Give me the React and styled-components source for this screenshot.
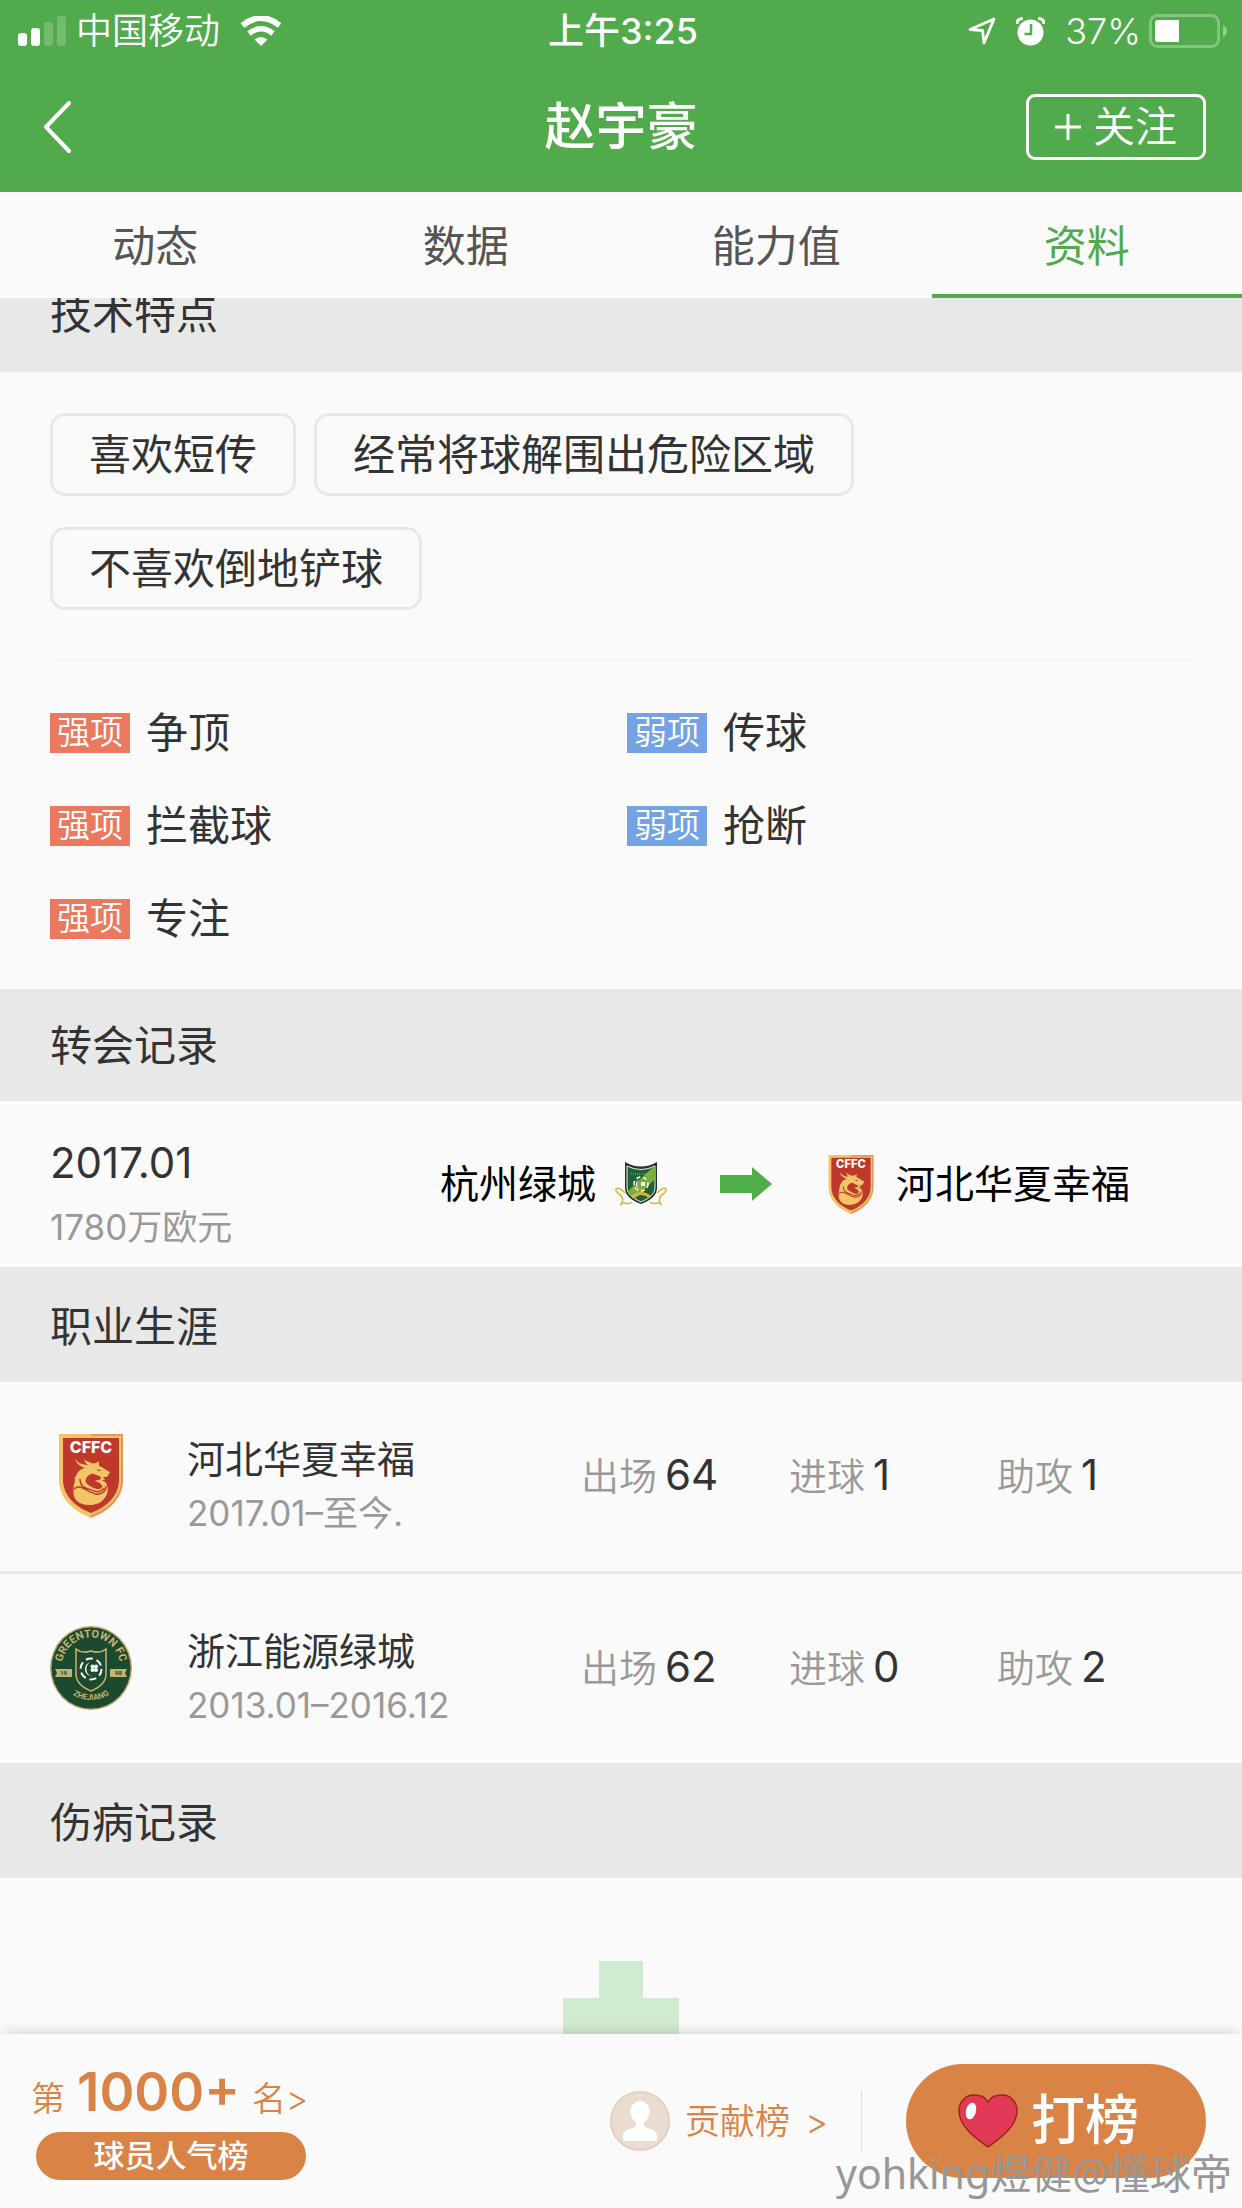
import React, { useState } from "react";
//Style
import styled, { createGlobalStyle } from "styled-components";

//Data
const tabs = ["动态", "数据", "能力值", "资料"];
const habits = ["喜欢短传", "经常将球解围出危险区域", "不喜欢倒地铲球"];
const strengths = ["争顶", "拦截球", "专注"];
const weaknesses = ["传球", "抢断"];

const App = () => {
  //State
  const [activeTab, setActiveTab] = useState("资料");

  return (
    <Screen>
      <GlobalStyle />
      <Header>
        <StatusBar>
          <StatusGroup>
            <SignalIcon />
            <span>中国移动</span>
            <WifiIcon />
          </StatusGroup>
          <Clock>上午3:25</Clock>
          <StatusGroup $end>
            <LocationIcon />
            <AlarmIcon />
            <span>37%</span>
            <BatteryIcon />
          </StatusGroup>
        </StatusBar>
        <TitleBar>
          <BackButton type="button" aria-label="返回">
            <svg width="30" height="54" viewBox="0 0 30 54" fill="none">
              <path
                d="M27 3 L4 27 L27 51"
                stroke="#fff"
                strokeWidth="4"
                strokeLinecap="round"
                strokeLinejoin="round"
              />
            </svg>
          </BackButton>
          <h1>赵宇豪</h1>
          <FollowButton type="button">
            <svg width="26" height="26" viewBox="0 0 26 26">
              <path d="M13 0V26M0 13H26" stroke="#fff" strokeWidth="3" />
            </svg>
            关注
          </FollowButton>
        </TitleBar>
      </Header>
      <Tabs>
        {tabs.map((tab) => (
          <Tab
            type="button"
            key={tab}
            $active={tab === activeTab}
            onClick={() => setActiveTab(tab)}
          >
            {tab}
          </Tab>
        ))}
      </Tabs>

      <Content>
        <Scrolled>
          <SectionTitle $edge="bottom">技术特点</SectionTitle>
          <Skills>
            <Tags>
              {habits.map((habit) => (
                <li key={habit}>{habit}</li>
              ))}
            </Tags>
            <Traits>
              <TraitList>
                {strengths.map((trait) => (
                  <li key={trait}>
                    <Badge $color="#ea7960">强项</Badge>
                    {trait}
                  </li>
                ))}
              </TraitList>
              <TraitList>
                {weaknesses.map((trait) => (
                  <li key={trait}>
                    <Badge $color="#73a3e5">弱项</Badge>
                    {trait}
                  </li>
                ))}
              </TraitList>
            </Traits>
          </Skills>

          <SectionTitle>转会记录</SectionTitle>
          <Transfer>
            <TransferInfo>
              <strong>2017.01</strong>
              <small>1780万欧元</small>
            </TransferInfo>
            <Club>
              杭州绿城
              <HangzhouCrest />
            </Club>
            <Arrow width="52" height="34" viewBox="0 0 52 34">
              <path d="M0 8H32V0L52 17L32 34V26H0Z" fill="#4fae49" />
            </Arrow>
            <Club $wide>
              <HebeiCrest width="46" height="59" />
              河北华夏幸福
            </Club>
          </Transfer>

          <SectionTitle $edge="top">职业生涯</SectionTitle>
          <Career>
            <CareerRow>
              <HebeiCrest width="82" height="84" />
              <CareerClub>
                <h3>河北华夏幸福</h3>
                <p>2017.01–至今.</p>
              </CareerClub>
              <Stat>
                出场<b>64</b>
              </Stat>
              <Stat>
                进球<b>1</b>
              </Stat>
              <Stat>
                助攻<b>1</b>
              </Stat>
            </CareerRow>
            <CareerRow>
              <GreentownCrest />
              <CareerClub>
                <h3>浙江能源绿城</h3>
                <p>2013.01–2016.12</p>
              </CareerClub>
              <Stat>
                出场<b>62</b>
              </Stat>
              <Stat>
                进球<b>0</b>
              </Stat>
              <Stat>
                助攻<b>2</b>
              </Stat>
            </CareerRow>
          </Career>

          <SectionTitle $edge="top">伤病记录</SectionTitle>
          <Injuries>
            <svg width="116" height="116" viewBox="0 0 116 116">
              <path
                d="M36 0H80V37H116V79H80V116H36V79H0V37H36Z"
                fill="#d1ebd1"
              />
            </svg>
          </Injuries>
        </Scrolled>
      </Content>

      <BottomBar>
        <Rank href="#rank">
          <RankLine>
            第<b>1000+</b>名&gt;
          </RankLine>
          <RankLabel>球员人气榜</RankLabel>
        </Rank>
        <Contributors href="#contributors">
          <AvatarIcon />
          <span>贡献榜</span>
          <span>&gt;</span>
        </Contributors>
        <VoteButton type="button">
          <HeartIcon />
          打榜
        </VoteButton>
        <Watermark>yohking煜健@懂球帝</Watermark>
      </BottomBar>
    </Screen>
  );
};

//Status icons
const SignalIcon = () => (
  <svg width="48" height="30" viewBox="0 0 48 30" fill="#fff">
    <rect x="0" y="17" width="9" height="13" rx="3" />
    <rect x="13" y="12" width="9" height="18" rx="3" />
    <rect x="26" y="6" width="9" height="24" rx="3" opacity="0.2" />
    <rect x="39" y="0" width="9" height="30" rx="3" opacity="0.2" />
  </svg>
);

const WifiIcon = () => (
  <svg width="42" height="30" viewBox="0 0 42 30" fill="none">
    <path d="M2.5 9.5Q21 -5.5 39.5 9.5" stroke="#fff" strokeWidth="6" />
    <path d="M9 17.5Q21 8 33 17.5" stroke="#fff" strokeWidth="5.5" />
    <path d="M14.5 23.5Q21 18.5 27.5 23.5L21 30Z" fill="#fff" />
  </svg>
);

const LocationIcon = () => (
  <svg width="28" height="28" viewBox="0 0 28 28" fill="none">
    <path
      d="M26 2L2 12.5L14.5 13.5L16 26Z"
      stroke="#fff"
      strokeWidth="2.8"
      strokeLinejoin="round"
    />
  </svg>
);

const AlarmIcon = () => (
  <svg width="29" height="29" viewBox="0 0 29 29" fill="none">
    <circle cx="14.5" cy="15.5" r="13" fill="#fff" />
    <path d="M1 7Q1 1.5 7 1.5M28 7Q28 1.5 22 1.5" stroke="#fff" strokeWidth="3" />
    <path d="M15 7V17H8.5" stroke="#51aa4b" strokeWidth="2.5" />
  </svg>
);

const BatteryIcon = () => (
  <svg width="79" height="34" viewBox="0 0 79 34">
    <rect
      x="1.5"
      y="1.5"
      width="68"
      height="31"
      rx="7"
      fill="none"
      stroke="#fff"
      strokeOpacity="0.3"
      strokeWidth="3"
    />
    <path d="M74 11Q78 13 78 17T74 23Z" fill="#fff" opacity="0.4" />
    <path d="M30 6V28H9Q6 28 6 25V9Q6 6 9 6Z" fill="#fff" />
  </svg>
);

//Bottom bar icons
const AvatarIcon = () => (
  <svg width="60" height="60" viewBox="0 0 60 60">
    <circle cx="30" cy="30" r="29" fill="#eadccf" stroke="#e2d0c0" strokeWidth="2" />
    <path
      d="M30 10C24 10 20 15 20.5 21C21 27 24 30 26 32V35C25 38 13 37 13 45V48Q13 50 16 50H44Q47 50 47 48V45C47 37 35 38 34 35V32C36 30 39 27 39.5 21C40 15 36 10 30 10Z"
      fill="#fff"
    />
  </svg>
);

const HeartIcon = () => (
  <svg width="60" height="54" viewBox="0 0 60 54">
    <path
      d="M30 53C22 47 1 34 1 17C1 7 8 1 16 1C23 1 28 4 30 8C32 4 37 1 44 1C52 1 59 7 59 17C59 34 38 47 30 53Z"
      fill="#e23a56"
      stroke="#9e2419"
      strokeWidth="1.5"
    />
    <ellipse cx="13" cy="17" rx="5" ry="8.5" fill="#fff" transform="rotate(14 13 17)" />
  </svg>
);

//Club crests
const HebeiCrest = ({ width, height }) => (
  <svg width={width} height={height} viewBox="0 0 64 84">
    <path d="M0 0H64V46C64 64 50 77 32 84C14 77 0 64 0 46Z" fill="#f3c468" />
    <path d="M32 0H64V46C64 64 50 77 32 84Z" fill="#e2985a" />
    <path d="M2 2H62V46C62 63 49 75 32 81C15 75 2 63 2 46Z" fill="#f3c468" />
    <path d="M4 4H60V46C60 61 48 73 32 79C16 73 4 61 4 46Z" fill="#be392c" />
    <text
      x="32"
      y="19"
      textAnchor="middle"
      fontFamily="Inter, sans-serif"
      fontSize="16"
      fontWeight="800"
      fill="#fff"
    >
      CFFC
    </text>
    <path
      d="M16 24C17 30 21 32 26 34C18 36 19 40 16 43C15 45 17 46 15 50C14 58 14 63 18 67C24 73 39 72 44 66C48 62 50 57 48 51C47 47 41 44 36 47C40 48 44 51 43 53C40 58 32 53 28 50C25 47 27 42 32 40C36 39 38 42 42 43L41 46L46 46L44 43L48 43L51 38C46 36 44 33 40 32L40 27C37 30 33 30 30 28C27 27 25 26 25 23C25 27 27 30 29 31C24 31 18 29 16 24Z"
      fill="#f3c468"
    />
    <path
      d="M15 55C22 49 29 59 37 60C43 61 47 57 47 52M21 45C21 54 28 54 35 57C40 59 44 56 45 54M31 44C28 46 31 50 34 49"
      fill="none"
      stroke="#be392c"
      strokeWidth="1.5"
    />
    <path d="M38 35L43 37L39 37Z" fill="#be392c" />
  </svg>
);

const GreentownCrest = () => (
  <svg width="82" height="84" viewBox="0 0 82 84">
    <defs>
      <path id="ring-top" d="M14 51A29 29 0 1 1 68 51" />
      <path id="ring-bottom" d="M10 54A34 34 0 0 0 72 54" />
    </defs>
    <ellipse cx="41" cy="42" rx="41" ry="42" fill="#b8a566" />
    <ellipse cx="41" cy="42" rx="39.5" ry="40.5" fill="#1c4a2e" />
    <g fill="#c5b270" fontFamily="Roboto, sans-serif" fontWeight="700">
      <text fontSize="11" textAnchor="middle">
        <textPath href="#ring-top" startOffset="50%">
          GREENTOWN FC
        </textPath>
      </text>
      <text fontSize="8" textAnchor="middle">
        <textPath href="#ring-bottom" startOffset="50%">
          ZHEJIANG
        </textPath>
      </text>
    </g>
    <path d="M5 43H22V51H5L7 47ZM77 43H60V51H77L75 47Z" fill="#c5b270" />
    <g fill="#1c4a2e" fontFamily="Roboto, sans-serif" fontSize="6" fontWeight="700">
      <text x="10" y="49">19</text>
      <text x="65" y="49">98</text>
    </g>
    <path
      d="M26 23Q32 28 41 25Q50 28 56 23V48Q56 59 41 65Q26 59 26 48Z"
      fill="#1c4a2e"
      stroke="#c5b270"
      strokeWidth="1.5"
    />
    <circle
      cx="41"
      cy="43"
      r="10.5"
      fill="none"
      stroke="#fff"
      strokeWidth="2"
      strokeDasharray="7 4"
    />
    <path d="M41 36A7 7 0 1 0 43 50A5.5 7 0 0 1 41 36Z" fill="#fff" />
    <g fill="#fff">
      <circle cx="42.5" cy="40.5" r="2" />
      <circle cx="46" cy="40.5" r="2" />
      <circle cx="42.5" cy="44" r="2" />
      <circle cx="46" cy="44" r="2" />
    </g>
  </svg>
);

const HangzhouCrest = () => (
  <svg width="58" height="44" viewBox="0 0 58 44" fill="none">
    <path
      d="M13 31C4 22 1 28 7 32C15 37 7 45 9 42C11 39 17 44 20 40M45 31C54 22 57 28 51 32C43 37 51 45 49 42C47 39 41 44 38 40"
      stroke="#dab438"
      strokeWidth="1.5"
    />
    <path d="M13 0Q29 9 45 0V26Q45 36 29 42Q13 36 13 26Z" fill="#26312d" />
    <path d="M15 4Q29 11 43 4V26Q43 34 29 40Q15 34 15 26Z" fill="#1f6239" stroke="#eee" />
    <path d="M40 6L43 5V17L23 37L16 30V29Z" fill="#7daf3c" />
    <path d="M19 12H39" stroke="#a0bd9a" strokeDasharray="1 1" />
    <circle cx="29" cy="22" r="7" stroke="#fff" strokeWidth="1.5" strokeDasharray="4 3" />
    <path d="M28 17A5 5 0 1 0 30 27A4 5 0 0 1 28 17Z" fill="#fff" />
    <path d="M29 20H33V24H29Z" fill="#fff" />
    <path d="M20 35Q29 28 38 35" stroke="#dab438" strokeWidth="3" />
  </svg>
);

//Styled components
const GlobalStyle = createGlobalStyle`
  * {
    box-sizing: border-box;
    margin: 0;
    padding: 0;
  }
  body {
    background: #fafafa;
    color: #333;
    font-family: Inter, "Noto Sans CJK SC", sans-serif;
    font-size: 42px;
    line-height: 48px;
  }
  button {
    background: none;
    border: none;
    color: inherit;
    font: inherit;
    cursor: pointer;
  }
  a {
    color: inherit;
    text-decoration: none;
  }
  ul {
    list-style: none;
  }
  svg {
    display: block;
    flex-shrink: 0;
  }
`;

const Screen = styled.div`
  display: flex;
  flex-direction: column;
  height: 100vh;
  overflow: hidden;
`;

const Header = styled.header`
  background: #51aa4b;
  color: #fff;
`;

const StatusBar = styled.div`
  display: grid;
  grid-template-columns: 1fr auto 1fr;
  align-items: center;
  height: 62px;
  padding: 0 14px 0 18px;
  font-size: 36px;
  font-weight: 350;
`;

const StatusGroup = styled.div`
  display: flex;
  align-items: center;
  justify-content: ${(props) => (props.$end ? "flex-end" : "flex-start")};
  gap: ${(props) => (props.$end ? "20px" : "10px")};
  span {
    margin-right: ${(props) => (props.$end ? "-12px" : "10px")};
  }
`;

const Clock = styled.time`
  font-weight: 500;
`;

const TitleBar = styled.div`
  display: grid;
  grid-template-columns: 1fr auto 1fr;
  align-items: center;
  height: 130px;
  padding: 0 36px;
  h1 {
    font-size: 51px;
    font-weight: 500;
  }
`;

const BackButton = styled.button`
  justify-self: start;
  padding: 6px;
`;

const FollowButton = styled.button`
  display: flex;
  align-items: center;
  justify-content: center;
  justify-self: end;
  gap: 12px;
  width: 180px;
  height: 66px;
  border: 3px solid #fff;
  border-radius: 9px;
  font-weight: 350;
`;

const Tabs = styled.nav`
  display: grid;
  grid-template-columns: repeat(4, 1fr);
`;

const Tab = styled.button`
  height: 106px;
  padding-top: 6px;
  border-bottom: 4px solid ${(props) => (props.$active ? "#51aa4b" : "transparent")};
  color: ${(props) => (props.$active ? "#51aa4b" : "#555")};
  font-size: 43px;
`;

const Content = styled.main`
  flex: 1;
  min-height: 0;
  overflow: hidden;
`;

const Scrolled = styled.div`
  margin-top: -41px;
`;

const SectionTitle = styled.h2`
  padding: 33px 50px 31px;
  background: #e8e8e8;
  border: 0 solid #e8e8e8;
  border-top-width: ${(props) => (props.$edge === "top" ? "3px" : "0")};
  border-bottom-width: ${(props) => (props.$edge === "bottom" ? "3px" : "0")};
  font-size: 42px;
  font-weight: 400;
`;

const Skills = styled.section`
  padding: 41px 50px 46px;
`;

const Tags = styled.ul`
  display: flex;
  flex-wrap: wrap;
  gap: 31px 18px;
  padding-bottom: 49px;
  border-bottom: 2px solid #f5f5f5;
  li {
    padding: 15px 36px 14px;
    border: 3px solid #e8e8e8;
    border-radius: 15px;
  }
`;

const Traits = styled.div`
  display: grid;
  grid-template-columns: 1fr 1fr;
  column-gap: 12px;
  padding-top: 48px;
`;

const TraitList = styled.ul`
  display: flex;
  flex-direction: column;
  gap: 45px;
  li {
    display: flex;
    align-items: center;
    gap: 16px;
  }
`;

const Badge = styled.span`
  padding: 0 7px 2px;
  background: ${(props) => props.$color};
  color: #fff;
  font-size: 33px;
  font-weight: 350;
  line-height: 38px;
`;

const Transfer = styled.section`
  display: flex;
  align-items: center;
  height: 166px;
  padding: 0 50px;
`;

const TransferInfo = styled.div`
  flex: 0 0 390px;
  display: flex;
  flex-direction: column;
  gap: 16px;
  padding-top: 22px;
  strong {
    font-weight: 400;
  }
  small {
    color: #999;
    font-size: 35px;
  }
`;

const Club = styled.div`
  display: flex;
  align-items: center;
  gap: ${(props) => (props.$wide ? "22px" : "16px")};
  color: #000;
  font-size: 39px;
`;

const Arrow = styled.svg`
  margin: 0 56px 0 50px;
`;

const Career = styled.ul`
  li + li {
    border-top: 3px solid #e8e8e8;
  }
`;

const CareerRow = styled.li`
  display: grid;
  grid-template-columns: 82px 1fr repeat(3, 208px);
  align-items: center;
  padding: 32px 37px 34px 50px;
`;

const CareerClub = styled.div`
  padding: 21px 0 0 55px;
  h3 {
    font-size: 38px;
    font-weight: 400;
  }
  p {
    padding-top: 6px;
    color: #999;
    font-size: 35px;
  }
`;

const Stat = styled.div`
  color: #999;
  font-size: 38px;
  font-weight: 350;
  b {
    margin-left: 8px;
    color: #333;
    font-size: 42px;
    font-weight: 400;
  }
`;

const Injuries = styled.section`
  display: flex;
  justify-content: center;
  padding: 83px 0;
`;

const BottomBar = styled.footer`
  position: relative;
  display: flex;
  align-items: center;
  height: 174px;
  padding: 0 36px 0 31px;
  background: #fafafa;
  box-shadow: 0 -4px 14px -4px rgba(0, 0, 0, 0.2);
  color: #d98446;
`;

const Rank = styled.a`
  margin-right: auto;
`;

const RankLine = styled.div`
  display: flex;
  align-items: baseline;
  gap: 12px;
  font-size: 34px;
  font-weight: 350;
  line-height: 60px;
  b {
    font-size: 53px;
    font-weight: 600;
  }
`;

const RankLabel = styled.div`
  width: 270px;
  margin: 3px 0 0 5px;
  border-radius: 24px;
  background: #d98446;
  color: #fff;
  font-size: 31px;
  font-weight: 500;
  text-align: center;
`;

const Contributors = styled.a`
  display: flex;
  align-items: center;
  gap: 15px;
  margin-right: 44px;
  padding-right: 33px;
  border-right: 1px solid #ddd;
  font-size: 35px;
  font-weight: 350;
`;

const VoteButton = styled.button`
  display: flex;
  align-items: center;
  justify-content: center;
  gap: 13px;
  width: 300px;
  height: 114px;
  padding-right: 15px;
  border-radius: 57px;
  background: #d98446;
  color: #fff;
  font-size: 54px;
  font-weight: 500;
`;

const Watermark = styled.p`
  position: absolute;
  right: 10px;
  bottom: 11px;
  color: #979797;
  font-family: "Noto Sans", "Noto Sans CJK SC", sans-serif;
  font-size: 41px;
`;

export default App;
